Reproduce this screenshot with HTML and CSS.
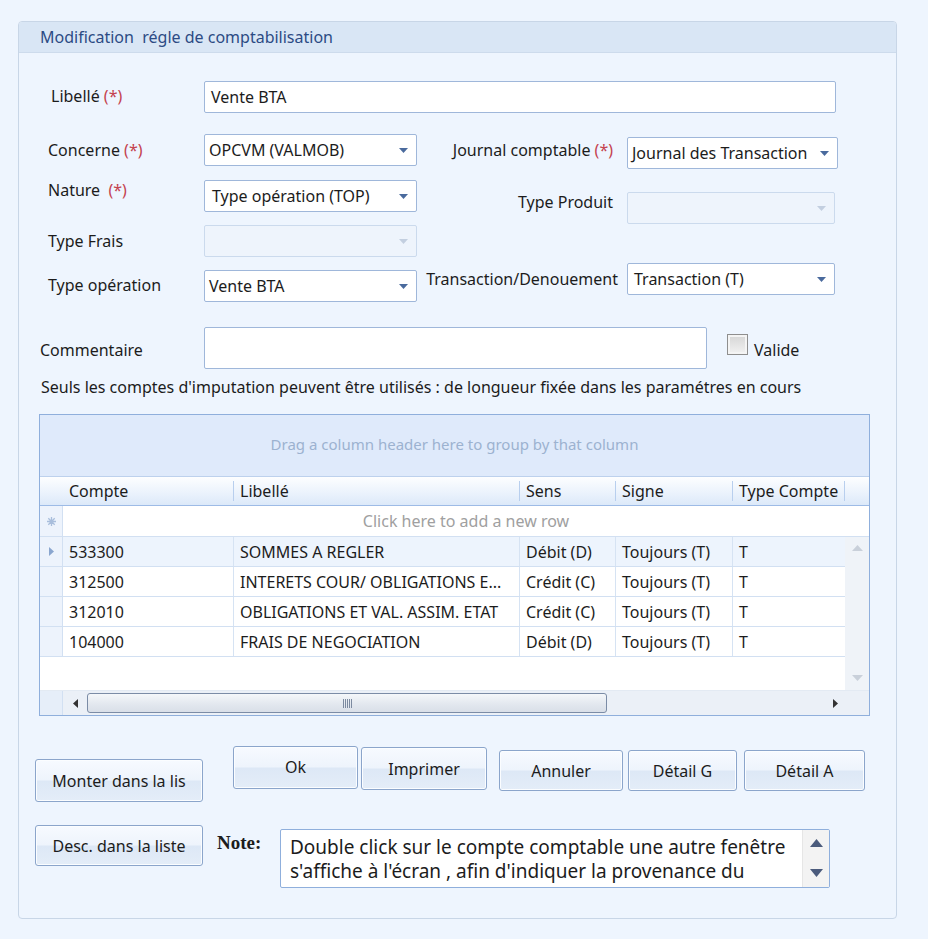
FILE: index.html
```html
<!DOCTYPE html>
<html lang="fr">
<head>
<meta charset="utf-8">
<title>Modification régle de comptabilisation</title>
<link rel="stylesheet" href="styles.css">
</head>
<body>
<div class="panel">
  <div class="panel-head">Modification&nbsp; régle de comptabilisation</div>

  <div class="row-libelle">
    <span class="lbl lbl-top">Libellé <span class="req">(*)</span></span>
    <div class="field field-libelle">Vente BTA</div>
  </div>

  <div class="cols">
    <div class="col-left">
      <div class="pair p-concerne">
        <span class="lbl">Concerne <span class="req">(*)</span></span>
        <div class="field select w-left pad5">OPCVM (VALMOB)<svg class="caret" width="9" height="5" viewBox="0 0 9 5"><path d="M0 0H9L4.5 5Z"/></svg></div>
      </div>
      <div class="pair p-nature">
        <span class="lbl up6">Nature&nbsp; <span class="req">(*)</span></span>
        <div class="field select w-left pad7">Type opération (TOP)<svg class="caret" width="9" height="5" viewBox="0 0 9 5"><path d="M0 0H9L4.5 5Z"/></svg></div>
      </div>
      <div class="pair p-frais">
        <span class="lbl">Type Frais</span>
        <div class="field select disabled w-left"><span></span><svg class="caret" width="9" height="5" viewBox="0 0 9 5"><path d="M0 0H9L4.5 5Z"/></svg></div>
      </div>
      <div class="pair p-typeop">
        <span class="lbl">Type opération</span>
        <div class="field select w-left pad5">Vente BTA<svg class="caret" width="9" height="5" viewBox="0 0 9 5"><path d="M0 0H9L4.5 5Z"/></svg></div>
      </div>
    </div>
    <div class="col-right">
      <div class="pair p-journal">
        <span class="lbl up4">Journal comptable <span class="req">(*)</span></span>
        <div class="field select w-journal pad5">Journal des Transaction<svg class="caret" width="9" height="5" viewBox="0 0 9 5"><path d="M0 0H9L4.5 5Z"/></svg></div>
      </div>
      <div class="pair p-produit">
        <span class="lbl up6">Type Produit</span>
        <div class="field select disabled w-right"><span></span><svg class="caret" width="9" height="5" viewBox="0 0 9 5"><path d="M0 0H9L4.5 5Z"/></svg></div>
      </div>
      <div class="pair p-trans">
        <span class="lbl lbl-trans">Transaction/Denouement</span>
        <div class="field select w-right pad6">Transaction (T)<svg class="caret" width="9" height="5" viewBox="0 0 9 5"><path d="M0 0H9L4.5 5Z"/></svg></div>
      </div>
    </div>
  </div>

  <div class="row-comment">
    <span class="lbl lbl-comment">Commentaire</span>
    <div class="field field-comment"></div>
    <div class="chk-wrap">
      <span class="checkbox"></span>
      <span class="chk-text">Valide</span>
    </div>
  </div>

  <div class="info">Seuls les comptes d'imputation peuvent être utilisés : de longueur fixée dans les paramétres en cours</div>

  <div class="grid">
    <div class="group-panel">Drag a column header here to group by that column</div>
    <div class="g-header">
      <div class="gh gh-ind"></div>
      <div class="gh">Compte</div>
      <div class="gh">Libellé</div>
      <div class="gh">Sens</div>
      <div class="gh">Signe</div>
      <div class="gh">Type Compte</div>
      <div class="gh gh-last"></div>
    </div>
    <div class="g-newrow">
      <div class="ind"><svg width="9" height="9" viewBox="0 0 9 9"><path d="M4.5 0V9M0 4.5H9M1.3 1.3L7.7 7.7M7.7 1.3L1.3 7.7" stroke="#a9bedc" stroke-width="1.3"/></svg></div>
      <div class="newrow-text">Click here to add a new row</div>
    </div>
    <div class="g-body">
      <div class="g-rows">
        <div class="g-row current">
          <div class="ind"><svg width="5" height="9" viewBox="0 0 5 9"><path d="M0 0L5 4.5L0 9Z" fill="#8aa6cf"/></svg></div>
          <div class="gc">533300</div>
          <div class="gc">SOMMES A REGLER</div>
          <div class="gc">Débit (D)</div>
          <div class="gc">Toujours (T)</div>
          <div class="gc gc-last">T</div>
        </div>
        <div class="g-row">
          <div class="ind"></div>
          <div class="gc">312500</div>
          <div class="gc">INTERETS COUR/ OBLIGATIONS E...</div>
          <div class="gc">Crédit (C)</div>
          <div class="gc">Toujours (T)</div>
          <div class="gc gc-last">T</div>
        </div>
        <div class="g-row">
          <div class="ind"></div>
          <div class="gc">312010</div>
          <div class="gc">OBLIGATIONS ET VAL. ASSIM. ETAT</div>
          <div class="gc">Crédit (C)</div>
          <div class="gc">Toujours (T)</div>
          <div class="gc gc-last">T</div>
        </div>
        <div class="g-row">
          <div class="ind"></div>
          <div class="gc">104000</div>
          <div class="gc">FRAIS DE NEGOCIATION</div>
          <div class="gc">Débit (D)</div>
          <div class="gc">Toujours (T)</div>
          <div class="gc gc-last">T</div>
        </div>
        <div class="g-empty"></div>
      </div>
      <div class="vscroll">
        <svg width="11" height="6" viewBox="0 0 11 6"><path d="M0 6L5.5 0L11 6Z" fill="#c9d0da"/></svg>
        <svg width="11" height="6" viewBox="0 0 11 6"><path d="M0 0L11 0L5.5 6Z" fill="#c9d0da"/></svg>
      </div>
    </div>
    <div class="hscroll">
      <div class="hs-ind"></div>
      <div class="hs-track">
        <svg class="hs-arrow" width="5" height="9" viewBox="0 0 5 9"><path d="M5 0L0 4.5L5 9Z" fill="#333"/></svg>
        <div class="thumb"><span class="grip"></span></div>
        <span class="hs-fill"></span>
        <svg class="hs-arrow" width="5" height="9" viewBox="0 0 5 9"><path d="M0 0L5 4.5L0 9Z" fill="#333"/></svg>
      </div>
    </div>
  </div>

  <div class="btn-row">
    <button class="btn b-monter">Monter dans la lis</button>
    <button class="btn b-ok">Ok</button>
    <button class="btn b-imprimer">Imprimer</button>
    <button class="btn b-annuler">Annuler</button>
    <button class="btn b-detg">Détail G</button>
    <button class="btn b-deta">Détail A</button>
  </div>

  <div class="note-row">
    <button class="btn b-desc">Desc. dans la liste</button>
    <span class="note-lbl">Note:</span>
    <div class="note-box">
      <div class="note-text">Double click sur le compte comptable une autre fenêtre s'affiche à l'écran , afin d'indiquer la provenance du</div>
      <div class="note-scroll">
        <svg width="13" height="8" viewBox="0 0 13 8"><path d="M0 8L6.5 0L13 8Z" fill="#4b5b7c"/></svg>
        <svg width="13" height="8" viewBox="0 0 13 8"><path d="M0 0L13 0L6.5 8Z" fill="#4b5b7c"/></svg>
      </div>
    </div>
  </div>
</div>
</body>
</html>
```

FILE: styles.css
```css
* { box-sizing: border-box; }

html, body {
  margin: 0;
  padding: 0;
}

body {
  width: 928px;
  height: 939px;
  overflow: hidden;
  background: #eef5fe;
  font-family: "Noto Sans", "Open Sans", sans-serif;
  font-size: 16px;
  color: #1c1c1c;
}

.panel {
  margin: 21px 0 0 18px;
  width: 879px;
  border: 1px solid #c8d6e7;
  border-radius: 4px;
  background: #eef5fe;
  padding-bottom: 30px;
}

.panel-head {
  height: 31px;
  line-height: 30px;
  padding-left: 21px;
  background: #d9e6f5;
  border-bottom: 1px solid #cddbec;
  border-radius: 3px 3px 0 0;
  color: #2c4b84;
  font-size: 16px;
}

.lbl {
  display: block;
  flex: none;
  white-space: nowrap;
  line-height: 20px;
}

.req { color: #c4424f; }

.up6 { margin-bottom: 12px; }
.up4 { margin-bottom: 6px; }

.field {
  height: 32px;
  background: #fff;
  border: 1px solid #9fb7da;
  border-radius: 2px;
  display: flex;
  align-items: center;
  padding-left: 6px;
  white-space: nowrap;
}

.row-libelle {
  display: flex;
  align-items: center;
  margin-top: 28px;
}

.lbl-top {
  width: 185px;
  padding-left: 32px;
  margin-bottom: 2px;
}

.field-libelle { width: 632px; }

.cols {
  display: flex;
  margin-top: 21px;
}

.col-left { width: 399px; }

.col-right { width: 420px; }

.pair {
  display: flex;
  align-items: center;
}

.col-left .lbl {
  width: 185px;
  padding-left: 29px;
}

.col-right .lbl {
  width: 209px;
  padding-right: 14px;
  text-align: right;
}

.col-right .lbl-trans { padding-right: 9px; }

.p-nature { margin-top: 14px; }
.p-frais { margin-top: 13px; }
.p-typeop { margin-top: 13px; }

.p-typeop .lbl { margin-bottom: 2px; }

.p-journal { margin-top: 3px; }
.p-produit { margin-top: 23px; }
.p-trans { margin-top: 39px; }

.select {
  justify-content: space-between;
  padding-right: 8px;
}

.select .caret { fill: #4a6a9d; flex: none; }

.select.disabled {
  background: #eef4fc;
  border-color: #cbdaed;
}

.select.disabled .caret { fill: #c3cfe0; }

.pad5 { padding-left: 4px; }
.pad6 { padding-left: 6px; }
.pad7 { padding-left: 7px; }

.w-left { width: 213px; }
.w-journal { width: 214px; }
.w-right { width: 208px; }

.row-comment {
  display: flex;
  align-items: center;
  margin-top: 25px;
}

.lbl-comment {
  width: 185px;
  padding-left: 21px;
  margin-top: 3px;
}

.field-comment {
  width: 503px;
  height: 42px;
}

.chk-wrap {
  align-self: flex-start;
  display: flex;
  align-items: flex-start;
  margin: 7px 0 0 20px;
}

.checkbox {
  width: 21px;
  height: 21px;
  border: 1px solid #8e8e8e;
  background: linear-gradient(#d5d5d5, #f2f2f2);
  box-shadow: inset 0 0 0 2px #f4f4f4;
}

.chk-text {
  margin-left: 6px;
  padding-top: 6px;
  line-height: 20px;
}

.info {
  margin-top: 8px;
  padding-left: 22px;
  line-height: 20px;
}

/* Grid */
.grid {
  margin: 17px 0 0 20px;
  width: 831px;
  height: 302px;
  border: 1px solid #8fafdc;
  background: #fff;
  display: flex;
  flex-direction: column;
}

.group-panel {
  height: 62px;
  background: #dfeafb;
  border-bottom: 1px solid #bdd1ed;
  color: #9cb2d0;
  font-size: 15px;
  display: flex;
  align-items: center;
  justify-content: center;
  padding-bottom: 3px;
}

.g-header {
  height: 29px;
  display: grid;
  grid-template-columns: 23px 171px 286px 96px 117px 112px 24px;
  background: linear-gradient(#fdfeff, #eaf2fc 60%, #dce9f9);
  border-bottom: 1px solid #9dbbe6;
}

.gh {
  display: flex;
  align-items: center;
  padding-left: 6px;
  border-right: 1px solid #b8cfee;
  margin: 4px 0;
  line-height: 20px;
  white-space: nowrap;
}

.gh-ind { margin: 0; border-right: 0; }
.gh-last { border-right: 0; }

.g-newrow {
  height: 31px;
  display: flex;
  border-bottom: 1px solid #d2e0f2;
}

.ind {
  width: 23px;
  flex: none;
  background: #edf3fc;
  border-right: 1px solid #d2e0f2;
  display: flex;
  align-items: center;
  justify-content: center;
}

.newrow-text {
  flex: 1;
  display: flex;
  align-items: center;
  justify-content: center;
  color: #a0a0a0;
}

.g-body {
  height: 153px;
  display: flex;
}

.g-rows {
  width: 805px;
  display: flex;
  flex-direction: column;
}

.g-row {
  height: 30px;
  display: grid;
  grid-template-columns: 23px 171px 286px 96px 117px 112px;
  border-bottom: 1px solid #d2e0f2;
}

.g-row.current { background: #edf4fd; }

.g-row .ind { width: auto; }

.gc {
  display: flex;
  align-items: center;
  padding-left: 6px;
  border-right: 1px solid #d6e3f3;
  white-space: nowrap;
  overflow: hidden;
}

.gc-last { border-right: 0; }

.g-empty { flex: 1; }

.vscroll {
  width: 24px;
  background: #eff3f8;
  display: flex;
  flex-direction: column;
  justify-content: space-between;
  align-items: center;
  padding: 8px 0 9px;
}

.hscroll {
  height: 25px;
  display: flex;
  border-top: 1px solid #e3eaf3;
}

.hs-ind {
  width: 23px;
  background: #e6eef9;
  border-right: 1px solid #d2e0f2;
}

.hs-track {
  flex: 1;
  background: #ebf0f7;
  display: flex;
  align-items: center;
  padding: 0 31px 0 10px;
}

.thumb {
  margin-left: 9px;
  width: 520px;
  height: 20px;
  border: 1px solid #7b8ca6;
  border-radius: 3px;
  background: linear-gradient(#f5f7fa, #e3e8ef 55%, #d9dfe8);
  display: flex;
  align-items: center;
  justify-content: center;
}

.grip {
  width: 9px;
  height: 9px;
  background: repeating-linear-gradient(90deg, #7c8aa0 0 1px, transparent 1px 2px);
}

.hs-fill { flex: 1; }

/* Buttons */
.btn {
  font-family: inherit;
  font-size: 16px;
  color: #1c1c1c;
  border: 1px solid #8ba5cb;
  border-radius: 3px;
  background: linear-gradient(#f7faff 0%, #eef4fc 48%, #dde8f6 52%, #e4edf8 100%);
  padding: 0;
  flex: none;
  box-shadow: inset 0 0 0 1px #fbfdff;
}

.btn-row {
  display: flex;
  align-items: flex-start;
  margin-top: 30px;
  padding-left: 16px;
}

.b-monter { margin-top: 13px; width: 168px; height: 43px; }
.b-ok { margin-left: 30px; width: 125px; height: 43px; padding-bottom: 2px; }
.b-imprimer { margin-left: 3px; margin-top: 1px; width: 126px; height: 43px; }
.b-annuler { margin-left: 12px; margin-top: 4px; width: 124px; height: 41px; }
.b-detg { margin-left: 5px; margin-top: 4px; width: 109px; height: 41px; }
.b-deta { margin-left: 7px; margin-top: 4px; width: 121px; height: 41px; }

.note-row {
  display: flex;
  align-items: flex-start;
  margin-top: 23px;
  padding-left: 16px;
}

.b-desc { width: 168px; height: 41px; }

.note-lbl {
  width: 63px;
  margin-left: 14px;
  margin-top: 8px;
  font-family: "Liberation Serif", serif;
  font-weight: bold;
  font-size: 19px;
  line-height: 20px;
}

.note-box {
  margin-top: 4px;
  width: 550px;
  height: 59px;
  background: #fff;
  border: 1px solid #8fafdc;
  border-radius: 2px;
  display: flex;
  overflow: hidden;
}

.note-text {
  flex: 1;
  padding: 5px 0 0 9px;
  font-size: 19px;
  line-height: 24px;
}

.note-scroll {
  width: 27px;
  background: #f3f3f3;
  border-left: 1px solid #e6e6e6;
  display: flex;
  flex-direction: column;
  justify-content: space-between;
  align-items: center;
  padding: 9px 0 10px;
}
```
